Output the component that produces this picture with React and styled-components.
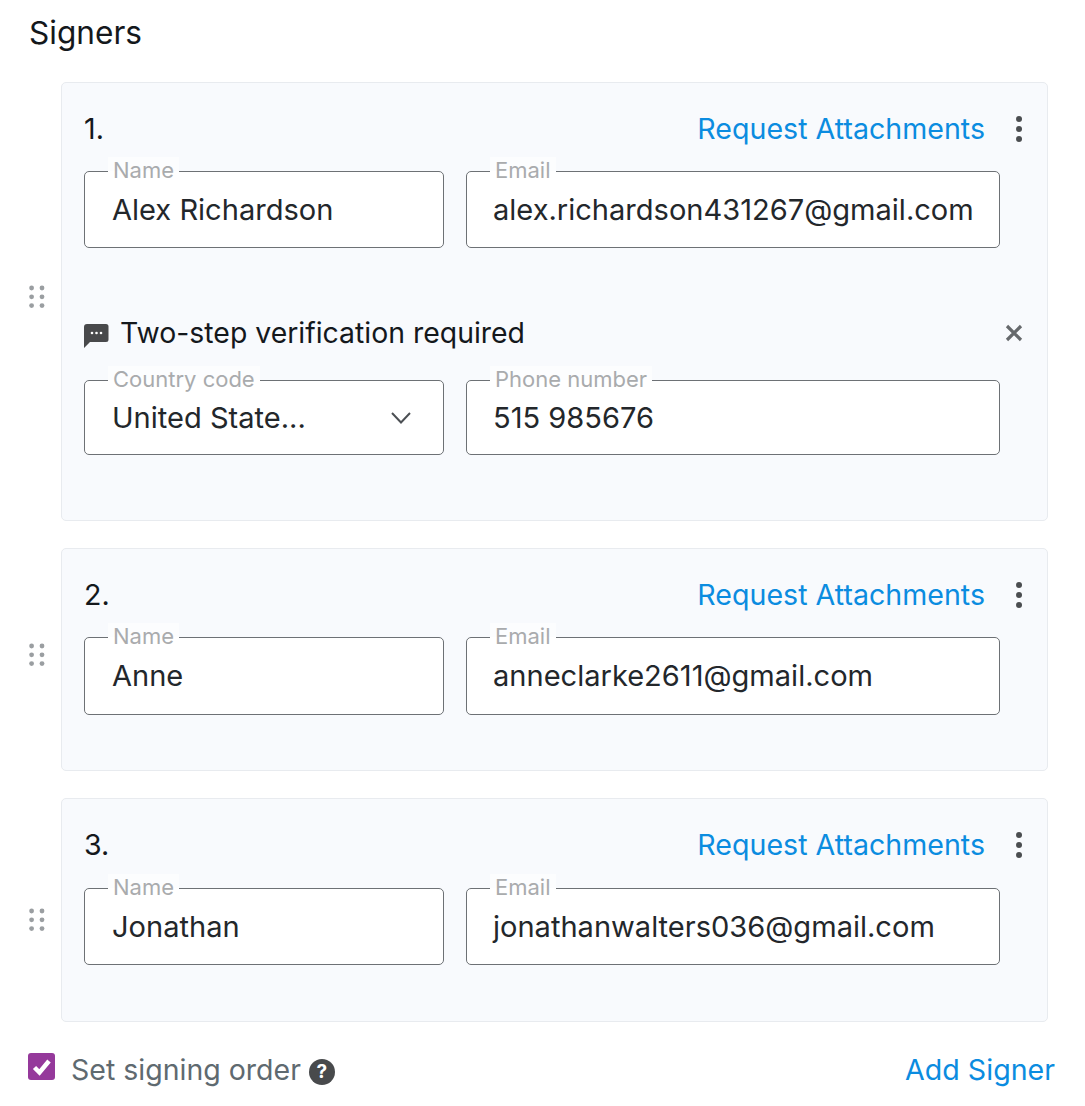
import React from 'react'
import styled, { createGlobalStyle } from 'styled-components'

const GlobalStyle = createGlobalStyle`
    html, body {
        margin: 0;
        background: #fff;
        font-family: 'Inter', 'Liberation Sans', sans-serif;
    }
`

const Page = styled.div`
    width: 1085px;
    height: 1106px;
    box-sizing: border-box;
    padding: 14px 30px 0 29px;
    overflow: hidden;
`

const Title = styled.h2`
    margin: 0 0 30px 0;
    font-size: 31.6px;
    line-height: 38px;
    font-weight: 400;
    color: #14181c;
`

const SignerList = styled.div`
    display: flex;
    flex-direction: column;
    gap: 27px;
`

const SignerRow = styled.div`
    display: flex;
    align-items: center;
    gap: 16px;
`

const Handle = styled.svg`
    width: 16px;
    height: 24px;
    flex: none;
    fill: #9a9ea1;
    margin-top: ${(p) => p.$shift * 2}px;
`

const Card = styled.div`
    box-sizing: border-box;
    width: 987px;
    height: ${(p) => p.$height}px;
    padding: 29px 23px 0 22px;
    background: #f8fafd;
    border: 1px solid #e8ebef;
    border-radius: 5px;
`

const CardHeader = styled.div`
    display: flex;
    align-items: center;
    justify-content: space-between;
    height: 34px;
    margin-bottom: ${(p) => p.$gap || 25}px;
`

const Number = styled.span`
    font-size: 28.6px;
    line-height: 34px;
    color: #14181c;
`

const HeaderActions = styled.div`
    display: flex;
    align-items: center;
    gap: 28px;
    margin-right: -1px;
`

const LinkText = styled.a`
    font-size: 28.6px;
    line-height: 34px;
    color: #0b8ce0;
    text-decoration: none;
`

const Dots = styled.svg`
    width: 12px;
    height: 26px;
    fill: #4a4d50;
    display: block;
`

const FieldRow = styled.div`
    display: flex;
    gap: 22px;
    width: 916px;
`

const Field = styled.div`
    position: relative;
    box-sizing: border-box;
    width: ${(p) => p.$width}px;
    height: ${(p) => p.$height || 77}px;
    padding-left: ${(p) => p.$inset || 27}px;
    padding-right: 31px;
    padding-bottom: ${(p) => (p.$height === 78 ? 1 : 0)}px;
    display: flex;
    align-items: center;
    justify-content: space-between;
    background: #fff;
    border: 1px solid #6d7175;
    border-radius: 5px;
    font-size: 29.05px;
    color: #23272b;
`

const FieldLabel = styled.span`
    position: absolute;
    left: 23px;
    top: -15px;
    padding: 0 5px;
    font-size: 22px;
    line-height: 26px;
    color: #a9abad;
    background: linear-gradient(#fcfdfe 0 14px, #fff 14px);
`

const Chevron = styled.svg`
    width: 22px;
    height: 14px;
    fill: none;
    stroke: #4c5054;
    stroke-width: 2;
`

const VerifyRow = styled.div`
    display: flex;
    align-items: center;
    gap: 11px;
    width: 939px;
    height: 34px;
    margin-top: 68px;
    margin-bottom: 30px;
`

const VerifyIcon = styled.svg`
    width: 25px;
    height: 25px;
    flex: none;
    margin-top: 5px;
`

const VerifyText = styled.span`
    flex: 1;
    font-size: 28.4px;
    line-height: 34px;
    color: #14181c;
`

const CloseIcon = styled.svg`
    width: 18px;
    height: 18px;
    flex: none;
    stroke: #66696c;
    stroke-width: 3.2;
`

const Footer = styled.div`
    display: flex;
    align-items: center;
    justify-content: space-between;
    margin-top: 31px;
`

const CheckLabel = styled.div`
    display: flex;
    align-items: center;
`

const CheckBox = styled.span`
    width: 27px;
    height: 27px;
    margin-left: -1px;
    margin-right: 16px;
    margin-top: -7px;
    border-radius: 3px;
    background: #95399b;
    display: flex;
    align-items: center;
    justify-content: center;
`

const CheckText = styled.span`
    font-size: 28.5px;
    line-height: 34px;
    color: #5f6a70;
`

const HelpBadge = styled.span`
    width: 26px;
    height: 26px;
    margin-left: 8px;
    margin-top: 3px;
    border-radius: 50%;
    background: #484a4c;
    color: #fff;
    font-size: 19px;
    font-weight: 700;
    display: flex;
    align-items: center;
    justify-content: center;
`

const DragHandle = ({ shift }) => (
    <Handle viewBox="0 0 16 24" $shift={shift}>
        {[3, 11.8, 20.6].map((y) => (
            <g key={y}>
                <circle cx="2.600" cy={y} r="2.400" />
                <circle cx="13" cy={y} r="2.400" />
            </g>
        ))}
    </Handle>
)

const Header = ({ n, gap }) => (
    <CardHeader $gap={gap}>
        <Number>{n}.</Number>
        <HeaderActions>
            <LinkText href="#">Request Attachments</LinkText>
            <Dots viewBox="0 0 12 26">
                <circle cx="6" cy="3" r="3" />
                <circle cx="6" cy="13" r="3" />
                <circle cx="6" cy="23" r="3" />
            </Dots>
        </HeaderActions>
    </CardHeader>
)

const NameEmail = ({ name, email, height }) => (
    <FieldRow>
        <Field $width={360} $height={height}>
            <FieldLabel>Name</FieldLabel>
            {name}
        </Field>
        <Field $width={534} $height={height} $inset={26}>
            <FieldLabel>Email</FieldLabel>
            {email}
        </Field>
    </FieldRow>
)

export default function App() {
    return (
        <Page>
            <GlobalStyle />
            <Title>Signers</Title>
            <SignerList>
                <SignerRow>
                    <DragHandle shift={-5} />
                    <Card $height={439}>
                        <Header n={1} />
                        <NameEmail name="Alex Richardson" email="alex.richardson431267@gmail.com" />
                        <VerifyRow>
                            <VerifyIcon viewBox="0 0 25 25">
                                <path
                                    d="M3 1h19a2.500 2.500 0 0 1 2.500 2.500v13a2.500 2.500 0 0 1-2.500 2.500H6l-6 6V4a3 3 0 0 1 3-3z"
                                    fill="#48494b"
                                />
                                <circle cx="8" cy="10" r="1.300" fill="#fff" />
                                <circle cx="12.500" cy="10" r="1.300" fill="#fff" />
                                <circle cx="17" cy="10" r="1.300" fill="#fff" />
                            </VerifyIcon>
                            <VerifyText>Two-step verification required</VerifyText>
                            <CloseIcon viewBox="0 0 18 18">
                                <path d="M2 2l14 14M16 2L2 16" />
                            </CloseIcon>
                        </VerifyRow>
                        <FieldRow>
                            <Field $width={360} $height={75}>
                                <FieldLabel>Country code</FieldLabel>
                                United State...
                                <Chevron viewBox="0 0 22 14">
                                    <path d="M2 2l9 9.500L20 2" />
                                </Chevron>
                            </Field>
                            <Field $width={534} $height={75} $inset={26}>
                                <FieldLabel>Phone number</FieldLabel>
                                515 985676
                            </Field>
                        </FieldRow>
                    </Card>
                </SignerRow>
                <SignerRow>
                    <DragHandle shift={-5} />
                    <Card $height={223}>
                        <Header n={2} />
                        <NameEmail name="Anne" email="anneclarke2611@gmail.com" height={78} />
                    </Card>
                </SignerRow>
                <SignerRow>
                    <DragHandle shift={10} />
                    <Card $height={224}>
                        <Header n={3} gap={26} />
                        <NameEmail name="Jonathan" email="jonathanwalters036@gmail.com" />
                    </Card>
                </SignerRow>
            </SignerList>
            <Footer>
                <CheckLabel>
                    <CheckBox>
                        <svg width="20" height="18" viewBox="0 0 20 18" fill="none" stroke="#fff" strokeWidth="4.5">
                            <path d="M2.500 9.500l5 5L17 3" />
                        </svg>
                    </CheckBox>
                    <CheckText>Set signing order</CheckText>
                    <HelpBadge>?</HelpBadge>
                </CheckLabel>
                <LinkText href="#">Add Signer</LinkText>
            </Footer>
        </Page>
    )
}
